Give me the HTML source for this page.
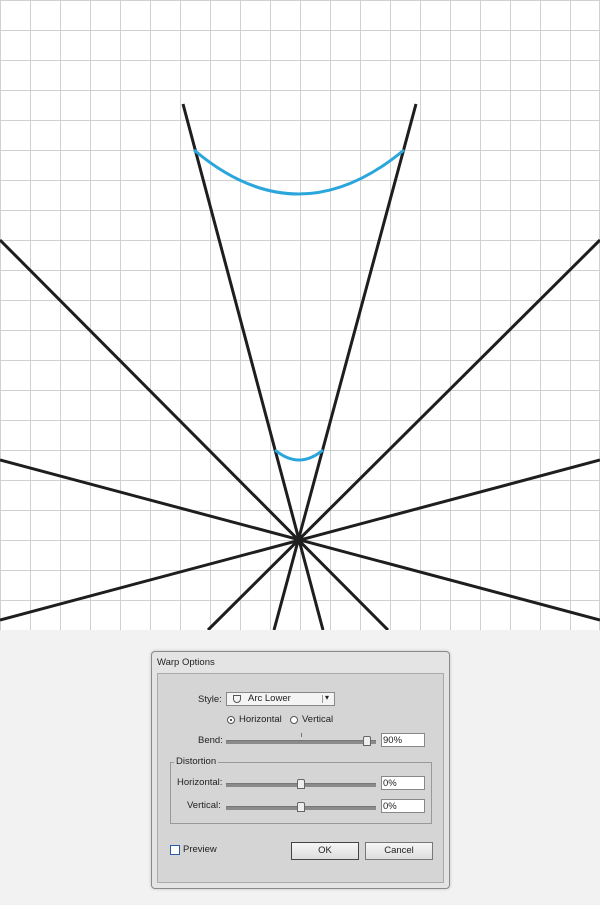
<!DOCTYPE html>
<html><head><style>
body{margin:0;width:600px;height:905px;background:#f2f2f2;font-family:"Liberation Sans",sans-serif;position:relative;overflow:hidden}
.dlg{position:absolute;left:151px;top:651px;width:297px;height:236px;background:#e4e4e4;border:1px solid #8a8a8a;border-radius:4px;box-shadow:0 0 3px rgba(0,0,0,.2)}
.in{position:absolute;left:5px;top:21px;width:285px;height:208px;background:#d5d5d5;border:1px solid #a9a9a9}
.t{position:absolute;font-size:9.5px;color:#222;white-space:nowrap}
.box{position:absolute;background:#fff;border:1px solid #888;height:12px}
.tr{position:absolute;height:3px;background:#8a8a8a;border-top:1px solid #777}
.th{position:absolute;width:6px;height:8px;background:#eee;border:1px solid #666;border-radius:2px 2px 0 0}
.btn{position:absolute;height:16px;border:1px solid #777;background:linear-gradient(#f6f6f6,#ddd);font-size:9.5px;text-align:center;line-height:16px;color:#222}
</style></head><body>
<svg width="600" height="630" style="position:absolute;left:0;top:0">
<rect width="600" height="630" fill="#fff"/>
<g stroke="#d0d0d0" stroke-width="1">
<path d="M0.5 0V630M30.5 0V630M60.5 0V630M90.5 0V630M120.5 0V630M150.5 0V630M180.5 0V630M210.5 0V630M240.5 0V630M270.5 0V630M300.5 0V630M330.5 0V630M360.5 0V630M390.5 0V630M420.5 0V630M450.5 0V630M480.5 0V630M510.5 0V630M540.5 0V630M570.5 0V630M599.5 0V630"/>
<path d="M0 0.5H600M0 30.5H600M0 60.5H600M0 90.5H600M0 120.5H600M0 150.5H600M0 180.5H600M0 210.5H600M0 240.5H600M0 270.5H600M0 300.5H600M0 330.5H600M0 360.5H600M0 390.5H600M0 420.5H600M0 450.5H600M0 480.5H600M0 510.5H600M0 540.5H600M0 570.5H600M0 600.5H600"/>
</g>
<g stroke="#1e1e1e" stroke-width="3" fill="none">
<path d="M183 104L323 630M416 104L274 630M0 240L388 630M600 240L208 630M0 460L600 620M600 460L0 620"/>
</g>
<circle cx="298" cy="540" r="4" fill="#1e1e1e"/>
<g stroke="#2aa6dc" stroke-width="3" fill="none">
<path d="M194 150Q298 238 404 150"/>
<path d="M275 450Q299 470 323 450"/>
</g>
</svg>
<div class="dlg">
<div class="t" style="left:5px;top:5px;font-size:9.5px">Warp Options</div>
<div class="in"></div>
<div class="t" style="left:46px;top:42px">Style:</div>
<div class="box" style="left:74px;top:40px;width:107px;background:#f4f4f4"></div>
<div style="position:absolute;left:170px;top:43px;width:1px;height:8px;background:#999"></div>
<div class="t" style="left:96px;top:41px">Arc Lower</div>
<div style="position:absolute;left:81px;top:43px;width:6px;height:6px;border:1px solid #555;border-radius:0 0 4px 4px"></div>
<div class="t" style="left:173px;top:41px;font-size:8px">▾</div>
<div style="position:absolute;left:75px;top:64px;width:6px;height:6px;border:1px solid #555;border-radius:50%;background:#fff"></div>
<div style="position:absolute;left:78px;top:67px;width:2px;height:2px;background:#222;border-radius:50%"></div>
<div class="t" style="left:87px;top:62px">Horizontal</div>
<div style="position:absolute;left:138px;top:64px;width:6px;height:6px;border:1px solid #555;border-radius:50%;background:#fff"></div>
<div class="t" style="left:150px;top:62px">Vertical</div>
<div class="t" style="left:46px;top:83px">Bend:</div>
<div style="position:absolute;left:149px;top:81px;width:1px;height:4px;background:#777"></div>
<div class="tr" style="left:74px;top:88px;width:150px"></div>
<div class="th" style="left:211px;top:84px"></div>
<div class="box" style="left:229px;top:81px;width:42px"></div>
<div class="t" style="left:231px;top:83px">90%</div>
<div style="position:absolute;left:18px;top:110px;width:260px;height:60px;border:1px solid #999"></div>
<div class="t" style="left:22px;top:104px;background:#d5d5d5;padding:0 2px">Distortion</div>
<div class="t" style="left:25px;top:125px">Horizontal:</div>
<div class="tr" style="left:74px;top:131px;width:150px"></div>
<div class="th" style="left:145px;top:127px"></div>
<div class="box" style="left:229px;top:124px;width:42px"></div>
<div class="t" style="left:231px;top:126px">0%</div>
<div class="t" style="left:35px;top:148px">Vertical:</div>
<div class="tr" style="left:74px;top:154px;width:150px"></div>
<div class="th" style="left:145px;top:150px"></div>
<div class="box" style="left:229px;top:147px;width:42px"></div>
<div class="t" style="left:231px;top:149px">0%</div>
<div style="position:absolute;left:18px;top:193px;width:8px;height:8px;border:1px solid #2b5aa8;background:#fff"></div>
<div class="t" style="left:31px;top:192px">Preview</div>
<div class="btn" style="left:139px;top:190px;width:66px;border-color:#444">OK</div>
<div class="btn" style="left:213px;top:190px;width:66px">Cancel</div>
</div>
</body></html>
